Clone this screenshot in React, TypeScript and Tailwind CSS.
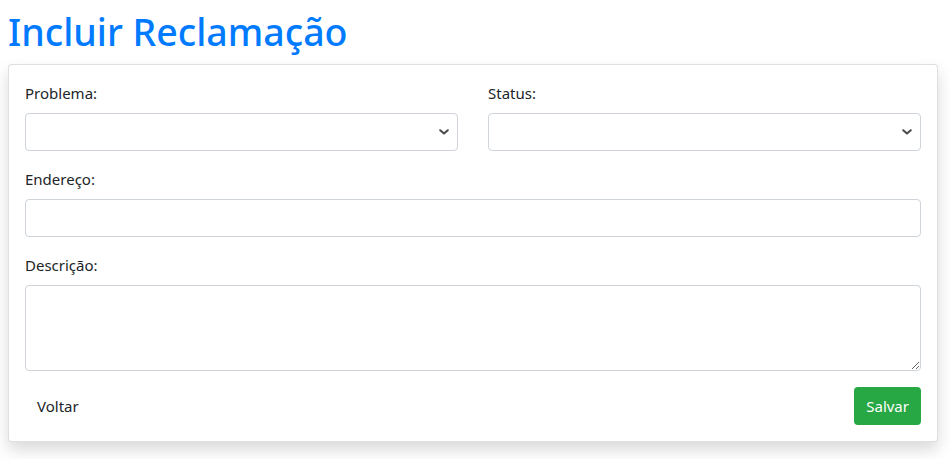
import React from "react";

const font = { fontFamily: '"Segoe UI", "Noto Sans", "Open Sans", sans-serif' };

function Chevron() {
  return (
    <svg width="10" height="6" viewBox="0 0 10 6" className="pointer-events-none absolute right-[8px] top-1/2 -translate-y-1/2">
      <path d="M1.2 1.2 L5 4.6 L8.8 1.2" fill="none" stroke="#4a4a4a" strokeWidth="2" strokeLinecap="round" strokeLinejoin="round" />
    </svg>
  );
}

function SelectBox() {
  return (
    <div className="relative h-[38px] w-full rounded-[4px] border border-[#ced4da] bg-white">
      <Chevron />
    </div>
  );
}

export default function App() {
  return (
    <div className="min-h-[459px] bg-white p-[8px] text-[15px] leading-[24px] text-[#212529]" style={font}>
      <h1 className="mb-[8px] text-[37.5px] font-medium leading-[48px] text-[#007bff]">Incluir Reclamação</h1>
      <div className="w-[930px] rounded-[4px] border border-[rgba(0,0,0,0.125)] bg-white p-[16px] shadow-[0_0.5rem_1rem_rgba(0,0,0,0.15)]">
        <div className="mb-[16px] grid grid-cols-2 gap-x-[30px]">
          <div>
            <label className="mb-[8px] block">Problema:</label>
            <SelectBox />
          </div>
          <div>
            <label className="mb-[8px] block">Status:</label>
            <SelectBox />
          </div>
        </div>
        <div className="mb-[16px]">
          <label className="mb-[8px] block">Endereço:</label>
          <div className="h-[38px] w-full rounded-[4px] border border-[#ced4da] bg-white" />
        </div>
        <div className="mb-[16px]">
          <label className="mb-[8px] block">Descrição:</label>
          <textarea
            rows={3}
            className="block h-[86px] w-full rounded-[4px] border border-[#ced4da] bg-white px-[12px] py-[6px] outline-none"
          />
        </div>
        <div className="flex items-center justify-between">
          <button className="h-[38px] rounded-[4px] px-[12px] text-[#212529]">Voltar</button>
          <button className="h-[38px] rounded-[4px] bg-[#28a745] px-[12px] text-white">Salvar</button>
        </div>
      </div>
    </div>
  );
}
